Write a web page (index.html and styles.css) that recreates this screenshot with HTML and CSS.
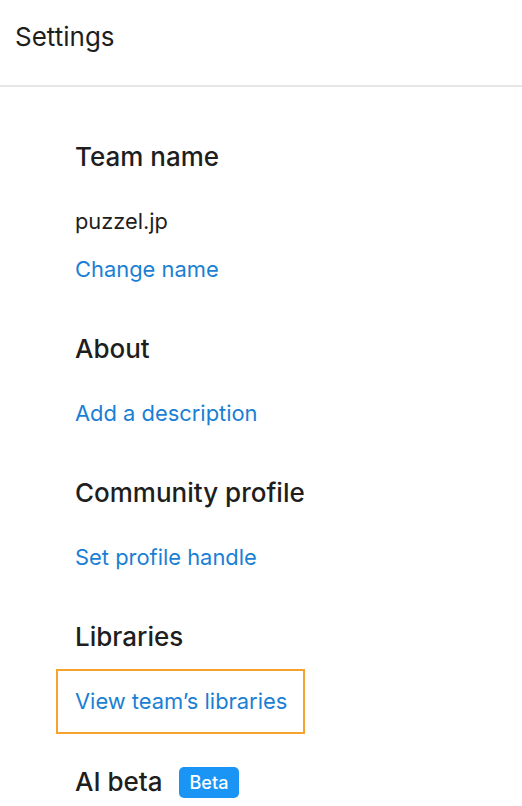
FILE: index.html
```html
<!DOCTYPE html>
<html lang="en">
<head>
<meta charset="utf-8">
<link rel="stylesheet" href="styles.css">
</head>
<body>
<header class="topbar">
  <h1 class="title">Settings</h1>
</header>
<main class="content">
  <section class="section">
    <h2 class="heading">Team name</h2>
    <p class="value">puzzel.jp</p>
    <a class="link" href="#">Change name</a>
  </section>
  <section class="section">
    <h2 class="heading">About</h2>
    <a class="link" href="#">Add a description</a>
  </section>
  <section class="section">
    <h2 class="heading">Community profile</h2>
    <a class="link" href="#">Set profile handle</a>
  </section>
  <section class="section">
    <h2 class="heading">Libraries</h2>
    <a class="link focused" href="#">View team’s libraries</a>
  </section>
  <section class="section">
    <h2 class="heading">AI beta <span class="badge">Beta</span></h2>
  </section>
</main>
</body>
</html>
```
FILE: styles.css
```css
* { box-sizing: border-box; }
html, body {
  margin: 0;
  padding: 0;
  background: #fff;
  font-family: Inter, "Noto Sans", sans-serif;
  color: #1e1e1e;
  overflow: hidden;
}
.topbar {
  height: 87px;
  border-bottom: 2px solid #e6e6e6;
  display: flex;
  align-items: flex-start;
  padding: 21px 15px 0;
}
.title {
  margin: 0;
  font-size: 26px;
  font-weight: 400;
  line-height: 32px;
}
.content {
  padding: 54px 0 0 75px;
  display: flex;
  flex-direction: column;
  gap: 48px;
}
.section {
  display: flex;
  flex-direction: column;
  align-items: flex-start;
  gap: 16px;
}
.heading {
  margin: 0 0 16px;
  font-size: 26px;
  font-weight: 500;
  line-height: 32px;
  display: flex;
  align-items: center;
  gap: 16px;
}
.value {
  margin: 0;
  font-size: 21.8px;
  line-height: 32px;
}
.link {
  font-size: 21.9px;
  line-height: 32px;
  color: #1a7fd4;
  text-decoration: none;
}
.focused {
  margin: -16px 0 -16px -19px;
  padding: 14px 16px 15px 17px;
  border: 2px solid #f5a32e;
}
.badge {
  background: #1b95f5;
  color: #fff;
  font-size: 18px;
  font-weight: 500;
  line-height: 31px;
  padding: 0 11px;
  border-radius: 5px;
}
```
